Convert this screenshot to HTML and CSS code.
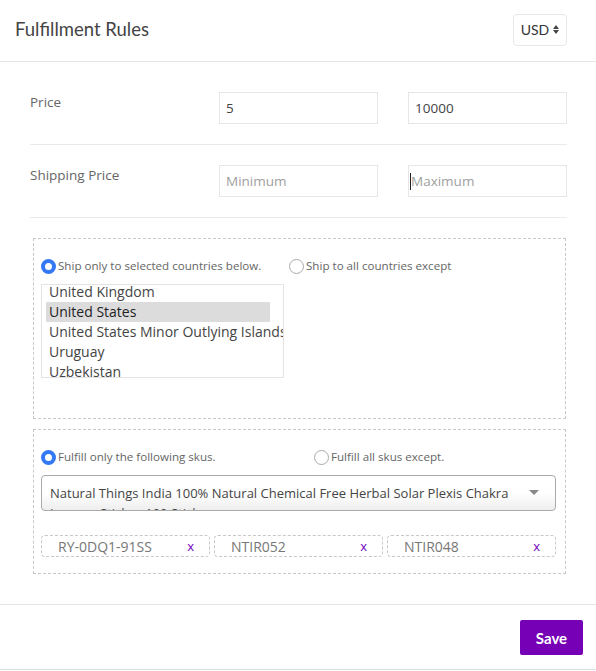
FILE: index.html
```html
<!DOCTYPE html>
<html>
<head>
<meta charset="utf-8">
<link rel="stylesheet" href="styles.css">
</head>
<body>
<div class="page">
  <header class="header">
    <h1 class="title">Fulfillment Rules</h1>
    <div class="currency">USD <span class="updown"><span class="up"></span><span class="down"></span></span></div>
  </header>
  <main class="form">
    <div class="row">
      <div class="label">Price</div>
      <div class="inputs">
        <div class="input">5</div>
        <div class="input">10000</div>
      </div>
    </div>
    <div class="row">
      <div class="label">Shipping Price</div>
      <div class="inputs">
        <div class="input placeholder">Minimum</div>
        <div class="input placeholder"><span class="caret"></span>Maximum</div>
      </div>
    </div>
    <section class="box box-countries">
      <div class="radios">
        <label class="radio radio-a"><span class="dot on"></span>Ship only to selected countries below.</label>
        <label class="radio"><span class="dot"></span>Ship to all countries except</label>
      </div>
      <div class="listbox">
        <ul class="list">
          <li>United Kingdom</li>
          <li class="selected">United States</li>
          <li>United States Minor Outlying Islands</li>
          <li>Uruguay</li>
          <li>Uzbekistan</li>
        </ul>
      </div>
    </section>
    <section class="box box-skus">
      <div class="radios">
        <label class="radio radio-b"><span class="dot on"></span>Fulfill only the following skus.</label>
        <label class="radio"><span class="dot"></span>Fulfill all skus except.</label>
      </div>
      <div class="select">
        <div class="select-text">Natural Things India 100% Natural Chemical Free Herbal Solar Plexis Chakra Incense Sticks - 100 Sticks</div>
        <span class="arrow"></span>
      </div>
      <div class="tags">
        <div class="tag"><span>RY-0DQ1-91SS</span><span class="x">x</span></div>
        <div class="tag"><span>NTIR052</span><span class="x">x</span></div>
        <div class="tag"><span>NTIR048</span><span class="x">x</span></div>
      </div>
    </section>
  </main>
  <footer class="footer">
    <button class="save">Save</button>
  </footer>
</div>
</body>
</html>
```
FILE: styles.css
```css
* { box-sizing: border-box; }
html, body { margin: 0; padding: 0; background: #fff; }
body { font-family: "Open Sans", "Liberation Sans", sans-serif; color: #555; }
.page { width: 596px; }
.header {
  height: 62px;
  border-bottom: 1px solid #e5e5e5;
  display: flex;
  align-items: center;
  justify-content: space-between;
  padding: 0 29px 2px 15px;
}
.title {
  margin: 0 0 2px;
  font-family: Lato, "Open Sans", sans-serif;
  font-weight: 400;
  font-size: 18.5px;
  color: #444;
}
.currency {
  height: 32px;
  width: 54px;
  border: 1px solid #e6e6e6;
  border-radius: 4px;
  display: flex;
  align-items: center;
  justify-content: center;
  gap: 4px;
  font-family: Lato, "Open Sans", sans-serif;
  font-size: 14px;
  color: #333;
}
.updown { display: flex; flex-direction: column; gap: 1px; }
.up { width: 0; height: 0; border-left: 3.5px solid transparent; border-right: 3.5px solid transparent; border-bottom: 4px solid #444; }
.down { width: 0; height: 0; border-left: 3.5px solid transparent; border-right: 3.5px solid transparent; border-top: 4px solid #444; }
.form { padding: 10px 29px 0 30px; }
.row {
  display: flex;
  padding: 20px 0 20px;
  border-bottom: 1px solid #eaeaea;
}
.label {
  width: 189px;
  font-size: 13.5px;
  color: #666;
  padding-top: 1px;
}
.inputs { display: flex; gap: 30px; }
.input {
  width: 159px;
  height: 32px;
  border: 1px solid #e6e6e6;
  font-size: 13.5px;
  color: #444;
  padding: 0 0 0 6px;
  display: flex;
  align-items: center;
}
.input.placeholder { color: #a0a0a0; }
.caret { display: inline-block; width: 1px; height: 17px; background: #222; margin-left: -5px; }
.box {
  margin: 20px 0 0 3px;
  width: 533px;
  border: 1px dashed #c8c8c8;
  padding: 0 9px 0 7px;
}
.box-countries { height: 181px; padding-top: 18px; }
.box-skus { margin-top: 10px; height: 145px; padding-top: 18px; }
.radios { display: flex; align-items: center; font-size: 11.6px; color: #666; }
.radio { display: flex; align-items: center; gap: 2px; }
.radio-a { width: 248px; }
.radio-b { width: 273px; }
.dot {
  width: 15px; height: 15px; border-radius: 50%;
  border: 1px solid #aaa; background: #fff;
  display: inline-block;
  margin-top: 2px;
}
.dot.on { border: 4.5px solid #3478f6; background: #fff; }
.listbox {
  margin-top: 10px;
  width: 243px;
  height: 94px;
  border: 1px solid #e4e4e4;
  overflow: hidden;
}
.list { list-style: none; margin: -3px 0 0; padding: 0 13px 0 4px; }
.list li {
  height: 20px;
  line-height: 20px;
  font-size: 14px;
  color: #444;
  padding-left: 3px;
  white-space: nowrap;
}
.list li.selected { background: #dcdcdc; color: #222; }
.select {
  margin-top: 10px;
  position: relative;
  height: 36px;
  border: 1px solid #aaa;
  border-radius: 4px;
  background: linear-gradient(#fff 0%, #fff 50%, #eee 100%);
  overflow: hidden;
  padding: 7px 40px 0 8px;
}
.select-text { font-size: 13px; line-height: 20px; color: #444; }
.arrow {
  position: absolute;
  right: 16px; top: 14px;
  width: 0; height: 0;
  border-left: 5px solid transparent; border-right: 5px solid transparent;
  border-top: 5px solid #888;
}
.tags { display: flex; gap: 4px; margin-top: 24px; }
.tag {
  flex: 1;
  height: 22px;
  border: 1px dashed #c8c8c8;
  border-radius: 4px;
  display: flex;
  align-items: center;
  justify-content: space-between;
  padding: 0 15px 0 16px;
  font-size: 14px;
  color: #777;
}
.tag .x { color: #7000c0; font-size: 13px; }
.footer {
  margin-top: 30px;
  border-top: 1px solid #e5e5e5;
  border-bottom: 1px solid #e0e0e0;
  height: 66px;
  display: flex;
  justify-content: flex-end;
  align-items: flex-start;
  padding: 15px 13px 0 0;
}
.save {
  width: 63px;
  height: 35px;
  background: #7600b5;
  color: #fff;
  border: none;
  border-radius: 2px;
  font-family: Lato, "Open Sans", sans-serif;
  font-weight: 700;
  font-size: 15px;
}
```
